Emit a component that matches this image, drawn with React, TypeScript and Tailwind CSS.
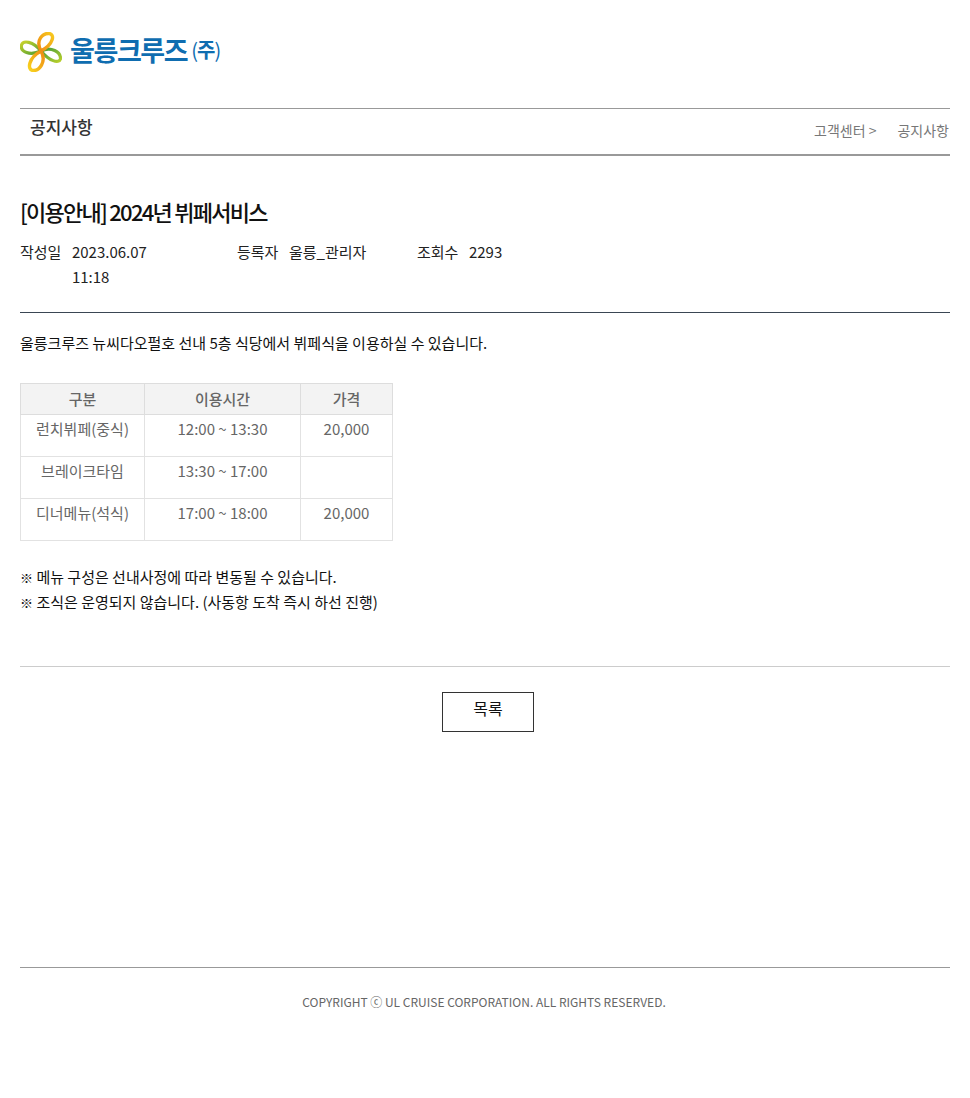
const FONT = "font-['Noto_Sans_CJK_KR','Noto_Sans',sans-serif]";

const rows = [
  { name: "런치뷔페(중식)", time: "12:00 ~ 13:30", price: "20,000" },
  { name: "브레이크타임", time: "13:30 ~ 17:00", price: "" },
  { name: "디너메뉴(석식)", time: "17:00 ~ 18:00", price: "20,000" },
];

function Logo() {
  return (
    <div className="flex h-[40px] items-center">
      <svg width="42" height="40" viewBox="0 0 42 40" fill="none">
        <defs>
          <linearGradient id="lobeLeft" x1="0" y1="0" x2="1" y2="1">
            <stop offset="0" stopColor="#c8d22a" />
            <stop offset="1" stopColor="#4f9e34" />
          </linearGradient>
          <linearGradient id="lobeRight" x1="0" y1="0" x2="1" y2="1">
            <stop offset="0" stopColor="#3f9a3a" />
            <stop offset="1" stopColor="#b9cf2c" />
          </linearGradient>
          <linearGradient id="lobeTop" x1="1" y1="0" x2="0" y2="1">
            <stop offset="0" stopColor="#f7c81e" />
            <stop offset="1" stopColor="#ee8a14" />
          </linearGradient>
          <linearGradient id="lobeBottom" x1="1" y1="0" x2="0" y2="1">
            <stop offset="0" stopColor="#ee8a14" />
            <stop offset="1" stopColor="#f8d31f" />
          </linearGradient>
        </defs>
        <path d="M21 19C13 9 3 8 1.500 13C0 20 10 24 21 19Z" stroke="url(#lobeLeft)" strokeWidth="3.200" strokeLinejoin="round" />
        <path d="M21 19C31 14 41 20 40.500 27C39 32 29 29 21 19Z" stroke="url(#lobeRight)" strokeWidth="3.200" strokeLinejoin="round" />
        <path d="M21 19C15 8 23 1 29 1.500C35 2 34 12 21 19Z" stroke="url(#lobeTop)" strokeWidth="3.400" strokeLinejoin="round" />
        <path d="M21 19C27 30 19 39 13 38.500C7 38 8 26 21 19Z" stroke="url(#lobeBottom)" strokeWidth="3.400" strokeLinejoin="round" />
      </svg>
      <div className="-mt-[5px] ml-[8px] flex items-center text-[#0f6db0]">
        <span className="text-[27px] leading-none font-bold tracking-[-1.400px]">울릉크루즈</span>
        <span className="ml-[4px] text-[20px] leading-none font-normal tracking-[-1px]">
          (<span className="font-bold">주</span>)
        </span>
      </div>
    </div>
  );
}

function Meta({ label, value, className }: { label: string; value: React.ReactNode; className: string }) {
  return (
    <div className={`flex gap-[10.500px] ${className}`}>
      <span className="shrink-0">{label}</span>
      <span>{value}</span>
    </div>
  );
}

export default function App() {
  return (
    <div className={`${FONT} min-h-[1098px] bg-white px-[20px] pt-[32px] text-[15px] leading-[25px] text-[#222]`}>
      <Logo />

      <div className="mt-[36px] flex h-[48px] justify-between border-t border-b-2 border-t-[#999] border-b-[#999] pl-[10px] pr-[1px]">
        <h2 className="pt-[5px] text-[17px] leading-[25px] font-medium text-[#333]">공지사항</h2>
        <div className="flex gap-[21px] pt-[9px] text-[14px] leading-[25px] text-[#777]">
          <span>고객센터 &gt;</span>
          <span>공지사항</span>
        </div>
      </div>

      <h1 className="mt-[39px] text-[22px] leading-[32px] font-medium tracking-[-1.750px] text-[#111]">
        [이용안내] 2024년 뷔페서비스
      </h1>

      <div className="mt-[12px] flex border-b border-[#3a4654] pb-[23px]">
        <Meta label="작성일" value={<>2023.06.07<br />11:18</>} className="w-[217px]" />
        <Meta label="등록자" value="울릉_관리자" className="w-[180px]" />
        <Meta label="조회수" value="2293" className="w-[120px]" />
      </div>

      <p className="mt-[17px] text-[#111]">울릉크루즈 뉴씨다오펄호 선내 5층 식당에서 뷔페식을 이용하실 수 있습니다.</p>

      <table className="mt-[28px] w-[373px] table-fixed border-collapse border border-[#ccc] text-center text-[#666]">
        <colgroup>
          <col className="w-[124px]" />
          <col className="w-[156px]" />
          <col className="w-[92px]" />
        </colgroup>
        <thead>
          <tr className="h-[31px] bg-[#f3f3f3]">
            <th className="border border-[#ddd] pb-[2px] font-medium">구분</th>
            <th className="border border-[#ddd] pb-[2px] font-medium">이용시간</th>
            <th className="border border-[#ddd] pb-[2px] font-medium">가격</th>
          </tr>
        </thead>
        <tbody>
          {rows.map((row) => (
            <tr key={row.name} className="h-[42px]">
              <td className="border border-[#e2e2e2] pt-[1px] align-top">{row.name}</td>
              <td className="border border-[#e2e2e2] pt-[1px] align-top">{row.time}</td>
              <td className="border border-[#e2e2e2] pt-[1px] align-top">{row.price}</td>
            </tr>
          ))}
        </tbody>
      </table>

      <div className="mt-[23px] text-[#111]">
        <p><span className="text-[13px] leading-none">※</span> 메뉴 구성은 선내사정에 따라 변동될 수 있습니다.</p>
        <p><span className="text-[13px] leading-none">※</span> 조식은 운영되지 않습니다. (사동항 도착 즉시 하선 진행)</p>
      </div>

      <div className="mt-[52px] flex justify-center border-t border-[#ccc] pt-[25px] pl-[6px]">
        <button className="h-[40px] w-[92px] border border-[#333] pb-[7px] text-[16px] text-[#111]">목록</button>
      </div>

      <footer className="mt-[235px] border-t border-[#999] pt-[21px] pr-[2px] text-center text-[12px] text-[#666]">
        COPYRIGHT ⓒ UL CRUISE CORPORATION. ALL RIGHTS RESERVED.
      </footer>
    </div>
  );
}
